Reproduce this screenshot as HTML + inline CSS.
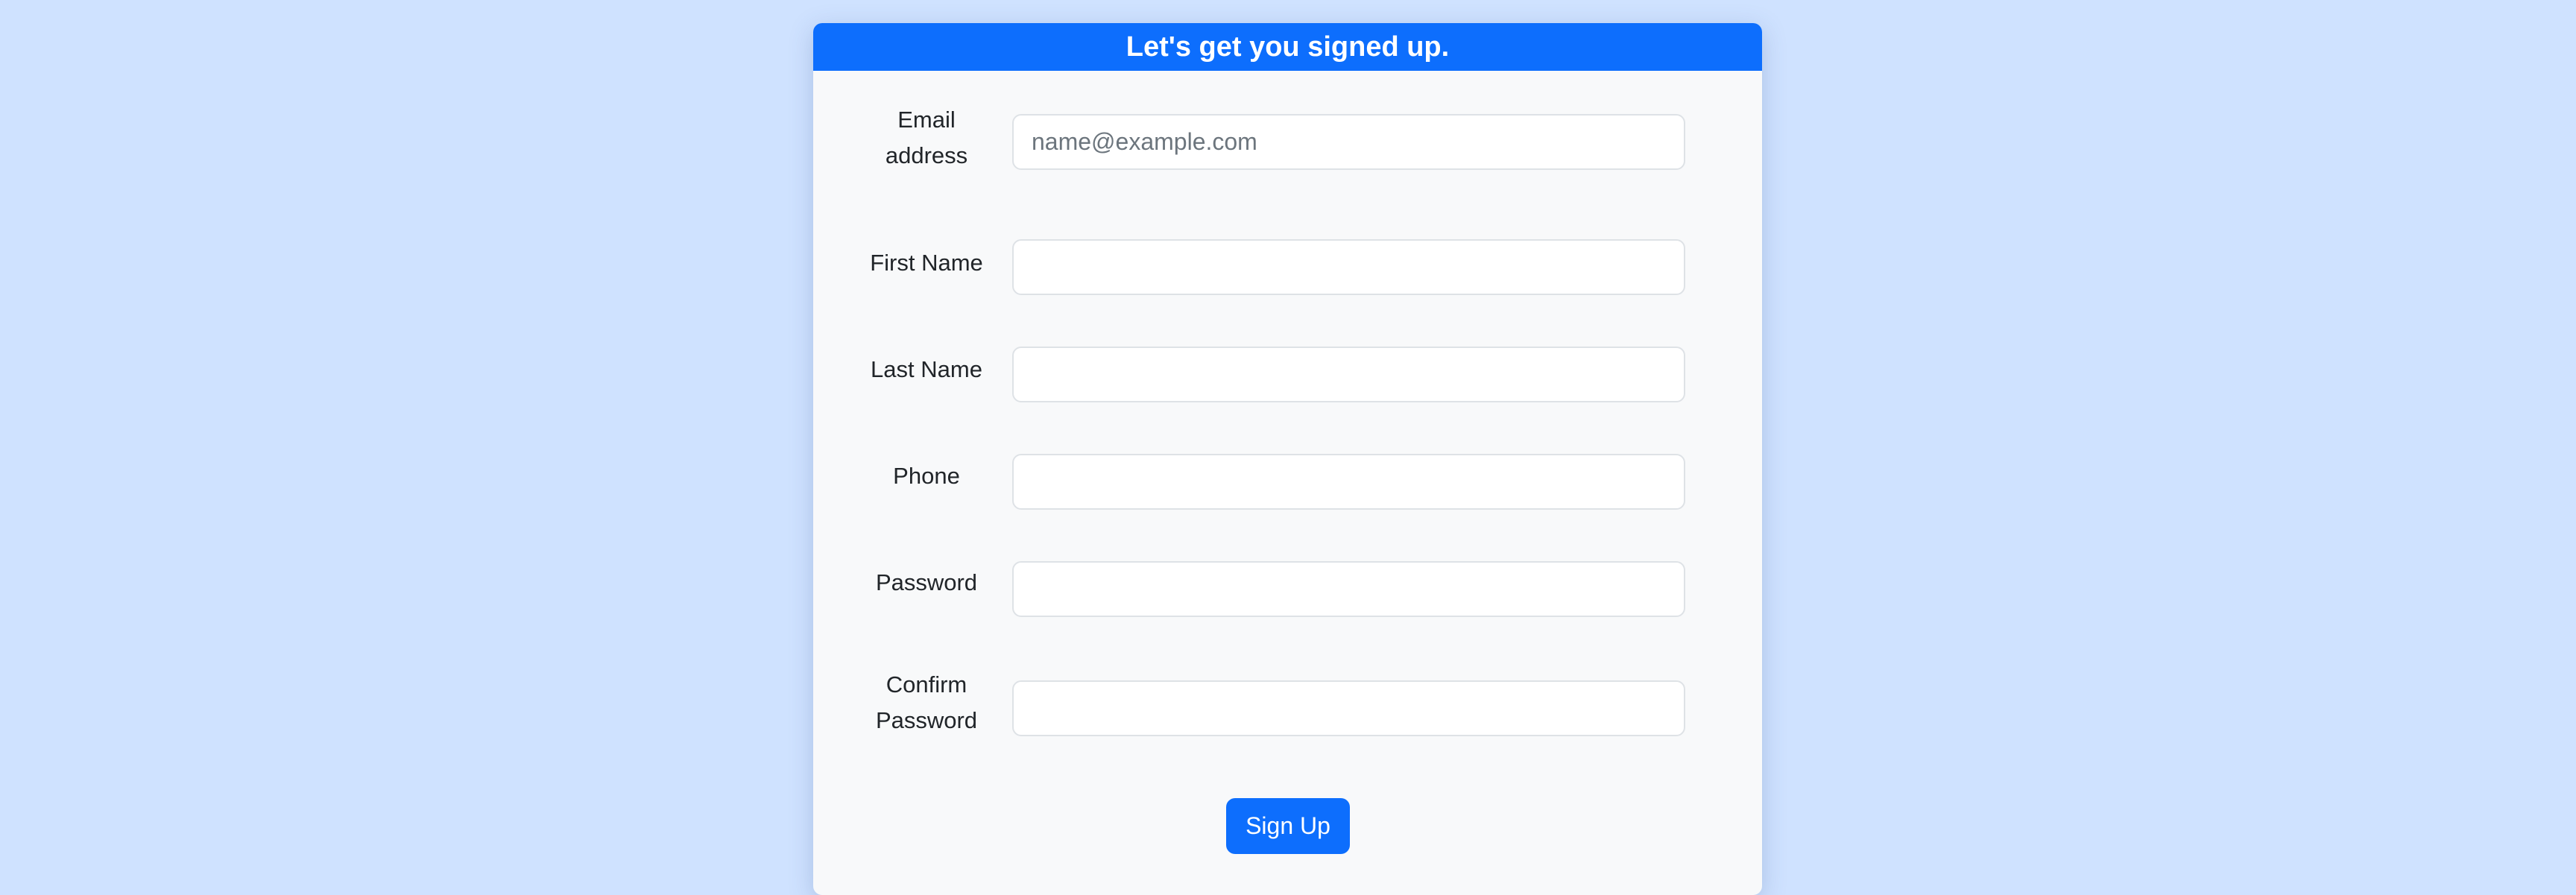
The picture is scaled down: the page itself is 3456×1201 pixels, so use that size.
<!DOCTYPE html>
<html><head><meta charset="utf-8"><style>
html,body{margin:0;padding:0}
body{width:3456px;height:1180px;background:#cfe2ff;position:relative;overflow:hidden;font-family:"Liberation Sans",Arial,sans-serif;color:#212529}
.card{position:absolute;left:1091px;top:31px;width:1273px;height:1170px;background:#f8f9fa;border-radius:12px;box-shadow:0 8px 32px rgba(60,90,150,0.25);overflow:hidden}
.hdr{position:absolute;left:0;top:0;width:100%;height:64px;background:#0d6efd;color:#fff;font-size:38px;font-weight:600;line-height:64px;text-align:center}
.lbl{position:absolute;left:1123px;width:240px;text-align:center;font-size:31px;line-height:48px}
.inp{position:absolute;left:1358px;width:903px;height:75px;box-sizing:border-box;background:#fff;border:2px solid #dee2e6;border-radius:12px;font-size:32px;color:#6c757d;line-height:71px;padding-left:24px}
.btn{position:absolute;left:1645px;top:1071px;width:166px;height:75px;background:#0d6efd;color:#fff;border-radius:12px;font-size:32px;line-height:75px;text-align:center}
</style></head><body>
<div class="card"><div class="hdr">Let's get you signed up.</div></div>
<div class="lbl" style="top:137px">Email<br>address</div>
<div class="inp" style="top:153px">name@example.com</div>
<div class="lbl" style="top:329px">First Name</div>
<div class="inp" style="top:321px"></div>
<div class="lbl" style="top:472px">Last Name</div>
<div class="inp" style="top:465px"></div>
<div class="lbl" style="top:615px">Phone</div>
<div class="inp" style="top:609px"></div>
<div class="lbl" style="top:758px">Password</div>
<div class="inp" style="top:753px"></div>
<div class="lbl" style="top:895px">Confirm<br>Password</div>
<div class="inp" style="top:913px"></div>
<div class="btn">Sign Up</div>
</body></html>
